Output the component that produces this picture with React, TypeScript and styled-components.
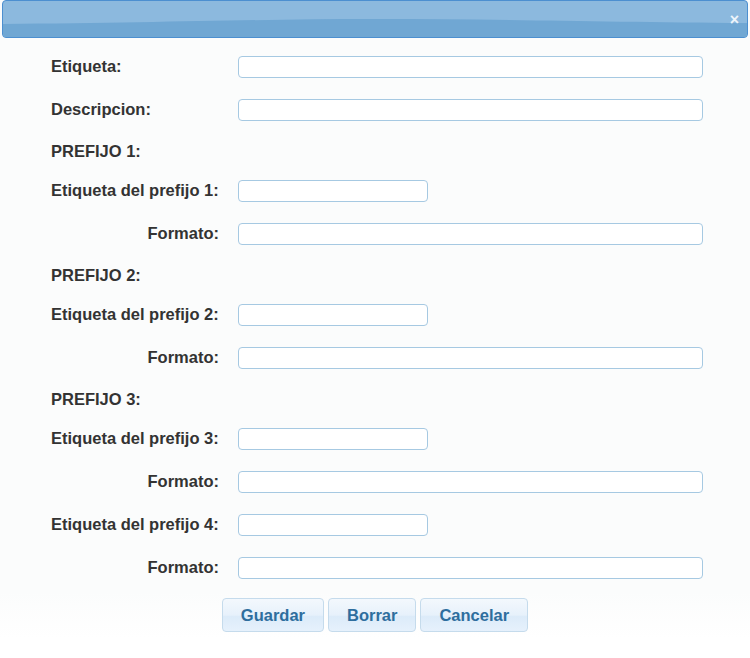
import styled, { createGlobalStyle } from "styled-components";

const GlobalStyle = createGlobalStyle`
  html, body {
    margin: 0;
    padding: 0;
    background: #ffffff;
  }
  body {
    font-family: "Liberation Sans", Arial, sans-serif;
  }
`;

type Row =
    | { kind: "field"; label: string; size: "long" | "short"; align?: "left" | "right" }
    | { kind: "section"; label: string };

const rows: Row[] = [
    { kind: "field", label: "Etiqueta:", size: "long" },
    { kind: "field", label: "Descripcion:", size: "long" },
    { kind: "section", label: "PREFIJO 1:" },
    { kind: "field", label: "Etiqueta del prefijo 1:", size: "short" },
    { kind: "field", label: "Formato:", size: "long", align: "right" },
    { kind: "section", label: "PREFIJO 2:" },
    { kind: "field", label: "Etiqueta del prefijo 2:", size: "short" },
    { kind: "field", label: "Formato:", size: "long", align: "right" },
    { kind: "section", label: "PREFIJO 3:" },
    { kind: "field", label: "Etiqueta del prefijo 3:", size: "short" },
    { kind: "field", label: "Formato:", size: "long", align: "right" },
    { kind: "field", label: "Etiqueta del prefijo 4:", size: "short" },
    { kind: "field", label: "Formato:", size: "long", align: "right" },
];

const buttons = ["Guardar", "Borrar", "Cancelar"];

export default function App() {
    return (
        <>
            <GlobalStyle />
            <Dialog>
                <TitleBar>
                    <Wave viewBox="0 0 746 36" preserveAspectRatio="none" aria-hidden>
                        <path d="M0 23 C 150 22, 250 18, 373 18 S 600 21, 746 22 L746 36 L0 36 Z" fill="#70a7d3" />
                    </Wave>
                    <CloseButton aria-label="Cerrar">×</CloseButton>
                </TitleBar>
                <Content>
                    <Form>
                        {rows.map((row, i) =>
                            row.kind === "section" ? (
                                <SectionRow key={i}>
                                    <Label $align="left">{row.label}</Label>
                                </SectionRow>
                            ) : (
                                <FieldRow key={i}>
                                    <Label $align={row.align ?? "left"}>{row.label}</Label>
                                    <TextInput type="text" $size={row.size} />
                                </FieldRow>
                            )
                        )}
                    </Form>
                    <ButtonPane>
                        {buttons.map((b) => (
                            <ActionButton key={b} type="button">{b}</ActionButton>
                        ))}
                    </ButtonPane>
                </Content>
            </Dialog>
        </>
    );
}

/* -------------------- Styled Components -------------------- */

const Dialog = styled.div`
    width: 750px;
    height: 658px;
    display: flex;
    flex-direction: column;
    background: linear-gradient(#fbfcfc 0%, #fbfcfc 90%, #ffffff 97%);
`;

const TitleBar = styled.div`
    position: relative;
    height: 36px;
    margin: 0 2px;
    border: 1px solid #4c8fd0;
    border-radius: 4px;
    background: #8cb9de;
    overflow: hidden;
    display: flex;
    align-items: center;
    justify-content: flex-end;
`;

const Wave = styled.svg`
    position: absolute;
    inset: 0;
    width: 100%;
    height: 100%;
`;

const CloseButton = styled.span`
    position: relative;
    margin-right: 8px;
    margin-top: 1px;
    color: #eef5fb;
    font-size: 16px;
    font-weight: bold;
    line-height: 1;
`;

const Content = styled.div`
    padding: 7px 0 0 51px;
    display: flex;
    flex-direction: column;
`;

const Form = styled.div`
    display: flex;
    flex-direction: column;
`;

const FieldRow = styled.div`
    height: 43px;
    display: grid;
    grid-template-columns: 168px auto;
    column-gap: 19px;
    align-items: center;
`;

const SectionRow = styled.div`
    height: 38px;
    display: flex;
    align-items: center;
    padding-top: 3px;
    box-sizing: border-box;
`;

const Label = styled.label<{ $align: "left" | "right" }>`
    font-size: 16.5px;
    font-weight: bold;
    color: #333333;
    white-space: nowrap;
    text-align: ${({ $align }) => $align};
`;

const TextInput = styled.input<{ $size: "long" | "short" }>`
    box-sizing: border-box;
    width: ${({ $size }) => ($size === "long" ? "465px" : "190px")};
    height: 22px;
    border: 1px solid #a6c9e2;
    border-radius: 4px;
    background: #ffffff;
    padding: 0 4px;
    margin: 0;
    font-size: 14px;
    outline: none;
`;

const ButtonPane = styled.div`
    display: flex;
    justify-content: center;
    gap: 4px;
    margin-top: 9px;
    margin-left: -51px;
`;

const ActionButton = styled.button`
    height: 34px;
    padding: 0 18px;
    border: 1px solid #c5dbec;
    border-radius: 4px;
    background: linear-gradient(#f3f8fd 0%, #e7f1fb 50%, #dcebf9 55%, #e6f1fc 100%);
    color: #2e6e9e;
    font-family: "Liberation Sans", Arial, sans-serif;
    font-size: 16.5px;
    font-weight: bold;
    cursor: pointer;
`;
